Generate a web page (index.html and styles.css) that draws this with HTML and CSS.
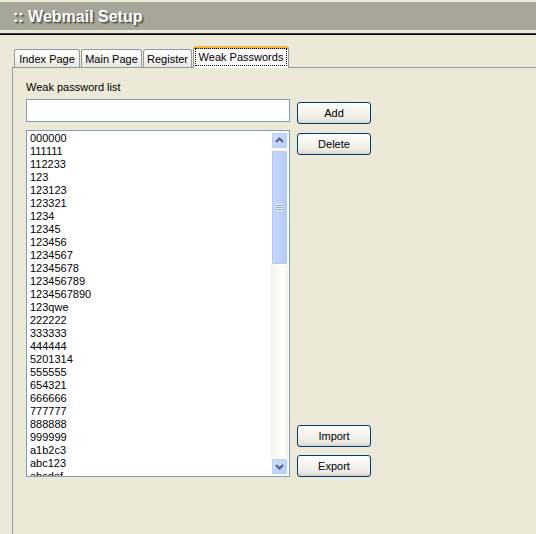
FILE: index.html
```html
<!DOCTYPE html>
<html lang="en">
<head>
    <meta charset="UTF-8">
    <title>Webmail Setup</title>
    <link rel="stylesheet" href="styles.css">
</head>
<body>

    <div class="header">
        <h1 class="title">:: Webmail Setup</h1>
    </div>
    <div class="rule"></div>

    <div class="tabs">
        <div class="tab tab-index">Index Page</div>
        <div class="tab tab-main">Main Page</div>
        <div class="tab tab-register">Register</div>
        <div class="tab tab-weak active"><span class="focus">Weak Passwords</span></div>
    </div>

    <div class="panel">
        <div class="form">
            <label class="caption" for="pw">Weak password list</label>
            <div></div>

            <input type="text" id="pw" class="field">
            <div><button class="btn add">Add</button></div>

            <div class="listbox">
                <div class="items" id="items"></div>
                <div class="scrollbar">
                    <div class="sb-btn">
                        <svg width="15" height="15" viewBox="0 0 15 15"><path d="M4 9 L7.5 5.5 L11 9" fill="none" stroke="#4d6185" stroke-width="2"/></svg>
                    </div>
                    <div class="thumb">
                        <span class="grip"></span>
                    </div>
                    <div class="track"></div>
                    <div class="sb-btn">
                        <svg width="15" height="15" viewBox="0 0 15 15"><path d="M4 6 L7.5 9.5 L11 6" fill="none" stroke="#4d6185" stroke-width="2"/></svg>
                    </div>
                </div>
            </div>
            <div class="side">
                <button class="btn">Delete</button>
                <div class="side-bottom">
                    <button class="btn">Import</button>
                    <button class="btn">Export</button>
                </div>
            </div>
        </div>
    </div>

    <script>
        const words = ["000000", "111111", "112233", "123", "123123", "123321", "1234", "12345",
            "123456", "1234567", "12345678", "123456789", "1234567890", "123qwe", "222222",
            "333333", "444444", "5201314", "555555", "654321", "666666", "777777", "888888",
            "999999", "a1b2c3", "abc123", "abcdef"];

        let html = "";
        for (let i = 0; i < words.length; i++) {
            html += `<div class="item">${words[i]}</div>`;
        }
        document.getElementById("items").innerHTML = html;
    </script>

</body>
</html>
```

FILE: styles.css
```css
body {
    margin: 0;
    background: #ece9d8;
    font-family: "Liberation Sans", Arial, sans-serif;
    font-size: 11px;
    color: #000;
    overflow: hidden;
    height: 534px;
}
.header {
    margin-top: 2px;
    height: 28px;
    background: #a8a698;
}
.title {
    margin: 0;
    padding-left: 13px;
    font-size: 16px;
    font-weight: bold;
    line-height: 29px;
    color: #fff;
    text-shadow: 1px 1px 0 #55544c, 2px 2px 1px #77766c;
}
.rule {
    margin-top: 3px;
    height: 1px;
    background: #3c3c3c;
    border-bottom: 1px solid #000;
}
.tabs {
    display: flex;
    align-items: flex-end;
    gap: 1px;
    margin-top: 11px;
    padding-left: 14px;
    height: 21px;
    position: relative;
    z-index: 1;
}
.tab {
    height: 18px;
    line-height: 18px;
    text-align: center;
    border: 1px solid #919b9c;
    border-bottom: none;
    border-radius: 3px 3px 0 0;
    background: linear-gradient(#ffffff, #f3f3ef 60%, #e6e5dd);
    box-sizing: border-box;
}
.tab-index {
    width: 66px;
}
.tab-main {
    width: 61px;
}
.tab-register {
    width: 49px;
}
.tab-weak {
    width: 96px;
}
.tab.active {
    height: 22px;
    margin-bottom: -1px;
    border-top: 3px solid #f4b63a;
    background: #fcfcfe;
    line-height: 16px;
}
.focus {
    display: inline-block;
    width: 90px;
    outline: 1px dotted #000;
    line-height: 16px;
}
.panel {
    margin-left: 12px;
    height: 470px;
    border-left: 1px solid #919b9c;
    border-top: 1px solid #919b9c;
    padding: 13px 0 0 13px;
}
.form {
    display: grid;
    grid-template-columns: 264px 74px;
    column-gap: 7px;
}
.caption {
    display: block;
    line-height: 13px;
    margin-bottom: 5px;
}
.field {
    width: 264px;
    height: 23px;
    box-sizing: border-box;
    border: 1px solid #7f9db9;
    margin: 0;
    padding: 0 3px;
    font: inherit;
    background: #fff;
}
.btn {
    display: block;
    width: 74px;
    height: 22px;
    margin: 0;
    padding: 0;
    border: 1px solid #003c74;
    border-radius: 3px;
    background: linear-gradient(#ffffff, #f4f3ee 45%, #ecebe6 80%, #d6d0c5);
    font: inherit;
    color: #000;
}
.add {
    margin-top: 3px;
}
.listbox {
    margin-top: 6px;
    height: 347px;
    box-sizing: border-box;
    border: 1px solid #7f9db9;
    background: #fff;
    display: flex;
    overflow: hidden;
}
.items {
    flex: 1;
    padding: 1px 0 0 3px;
    overflow: hidden;
}
.item {
    height: 13px;
    line-height: 13px;
}
.scrollbar {
    width: 17px;
    margin: 1px 1px 1px 0;
    display: flex;
    flex-direction: column;
    background: linear-gradient(90deg, #f3f1ec, #fefefb 70%, #f1efe8);
}
.sb-btn {
    height: 17px;
    box-sizing: border-box;
    border: 1px solid #fff;
    border-radius: 2px;
    background: linear-gradient(135deg, #d2defc, #b6cbf8);
    box-shadow: inset 0 0 0 1px #b9cdf6;
    display: flex;
    align-items: center;
    justify-content: center;
}
.thumb {
    height: 115px;
    margin-top: 1px;
    box-sizing: border-box;
    border: 1px solid #fff;
    border-radius: 2px;
    background: linear-gradient(90deg, #c8d8fc, #bcd0fa 60%, #b2c8f6);
    box-shadow: inset 0 0 0 1px #b3c8f5;
    display: flex;
    align-items: center;
    justify-content: center;
}
.grip {
    width: 7px;
    height: 7px;
    background: repeating-linear-gradient(#eef3fe 0 1px, #8ca6de 1px 2px);
}
.track {
    flex: 1;
}
.side {
    margin-top: 6px;
    display: flex;
    flex-direction: column;
    justify-content: space-between;
    padding-top: 3px;
}
.side-bottom {
    display: flex;
    flex-direction: column;
    gap: 8px;
}
```
